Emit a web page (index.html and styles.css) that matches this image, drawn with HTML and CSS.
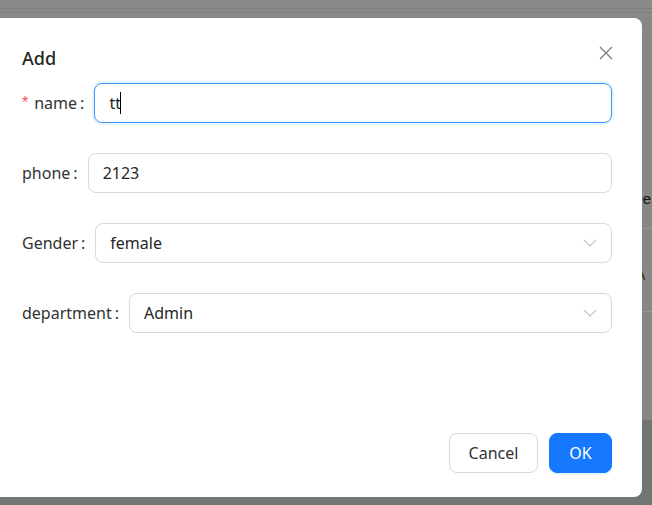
FILE: index.html
```html
<!DOCTYPE html>
<html>
<head>
<meta charset="utf-8">
<link rel="stylesheet" href="styles.css">
</head>
<body>
<div class="page">
  <div class="bg-top"><div class="bg-band"></div></div>
  <div class="bg-body">
    <div class="bg-head"><span class="bg-text">Dep</span></div>
    <div class="bg-row"><span class="bg-text bg-a">A</span></div>
    <div class="bg-row bg-last"></div>
  </div>
  <div class="bg-foot"></div>
</div>

<div class="modal">
  <button class="close" aria-label="close">
    <svg width="14" height="14" viewBox="0 0 14 14"><path d="M1 1 L13 13 M13 1 L1 13" stroke="#808080" stroke-width="1.4" fill="none"/></svg>
  </button>
  <div class="title">Add</div>
  <div class="form">
    <div class="row">
      <label class="label"><span class="req">*</span>name<span class="colon">:</span></label>
      <div class="input focused"><span>tt</span><span class="caret"></span></div>
    </div>
    <div class="row">
      <label class="label">phone<span class="colon">:</span></label>
      <div class="input"><span>2123</span></div>
    </div>
    <div class="row">
      <label class="label">Gender<span class="colon">:</span></label>
      <div class="input select"><span>female</span>
        <svg class="arrow" width="14" height="10" viewBox="0 0 14 10"><path d="M1 2 L7 8 L13 2" stroke="#c4c4c4" stroke-width="1.1" fill="none"/></svg>
      </div>
    </div>
    <div class="row">
      <label class="label">department<span class="colon">:</span></label>
      <div class="input select"><span>Admin</span>
        <svg class="arrow" width="14" height="10" viewBox="0 0 14 10"><path d="M1 2 L7 8 L13 2" stroke="#c4c4c4" stroke-width="1.1" fill="none"/></svg>
      </div>
    </div>
  </div>
  <div class="footer">
    <button class="btn">Cancel</button>
    <button class="btn primary">OK</button>
  </div>
</div>
</body>
</html>
```

FILE: styles.css
```css
* { box-sizing: border-box; }
html, body { margin: 0; padding: 0; }
body {
  width: 652px;
  height: 505px;
  overflow: hidden;
  position: relative;
  font-family: "Noto Sans", "Open Sans", sans-serif;
  background: #8a8a8a;
}
.page {
  height: 505px;
  display: flex;
  flex-direction: column;
}
.bg-top {
  height: 18px;
  background: #8a8a8a;
  padding-top: 8px;
}
.bg-band {
  height: 5px;
  border-top: 1px solid #7e7e7e;
  border-bottom: 1px solid #7e7e7e;
}
.bg-body {
  flex: 0 0 402px;
  background: #878787;
  padding-top: 150px;
  padding-left: 632px;
}
.bg-head {
  height: 61px;
  display: flex;
  align-items: center;
  border-bottom: 1px solid #959595;
}
.bg-row {
  height: 83px;
  display: flex;
  align-items: center;
  padding-top: 10px;
  border-bottom: 1px solid #959595;
}
.bg-last { border-bottom: none; }
.bg-text {
  font-family: "Liberation Sans", sans-serif;
  font-size: 15px;
  color: #111;
  white-space: nowrap;
}
.bg-a { color: #3a2a00; font-size: 14px; margin-left: 4px; }
.bg-foot {
  flex: 1;
  background: #717874;
}

.modal {
  position: absolute;
  top: 18px;
  left: -10px;
  width: 652px;
  height: 479px;
  background: #fff;
  border-radius: 8px;
  padding: 28px 30px 24px 32px;
  display: flex;
  flex-direction: column;
  color: rgba(0,0,0,0.88);
}
.close {
  position: absolute;
  top: 28px;
  right: 29px;
  width: 14px;
  height: 14px;
  padding: 0;
  border: none;
  background: none;
  display: flex;
}
.title {
  font-size: 18px;
  font-weight: 500;
  line-height: 24px;
  height: 24px;
  color: #262626;
}
.form {
  margin-top: 13px;
  display: flex;
  flex-direction: column;
  gap: 30px;
}
.row {
  display: flex;
  align-items: center;
  height: 40px;
}
.label {
  font-size: 16px;
  color: #333;
  display: flex;
  align-items: center;
  white-space: nowrap;
}
.req {
  color: #ff4d4f;
  margin-right: 6px;
  font-family: "Liberation Sans", sans-serif;
  font-size: 16px;
}
.colon {
  margin-left: 3px;
  margin-right: 10px;
}
.input {
  flex: 1;
  height: 40px;
  border: 1px solid #d9d9d9;
  border-radius: 8px;
  padding: 0 14px;
  display: flex;
  align-items: center;
  font-size: 16px;
  color: #262626;
}
.input.focused {
  border-color: #4096ff;
  box-shadow: 0 0 0 2px rgba(5,145,255,0.1);
}
.caret {
  width: 1px;
  height: 22px;
  background: #000;
  margin-left: -1px;
}
.select { justify-content: space-between; }
.footer {
  margin-top: auto;
  display: flex;
  justify-content: flex-end;
  gap: 11px;
}
.btn {
  height: 40px;
  padding: 0 18px;
  border-radius: 8px;
  border: 1px solid #d9d9d9;
  background: #fff;
  font-family: "Noto Sans", sans-serif;
  font-size: 16px;
  color: #333;
  width: 89px;
}
.btn.primary {
  width: 63px;
  padding: 0;
  background: #1677ff;
  border-color: #1677ff;
  color: #fff;
  box-shadow: 0 2px 0 rgba(5,145,255,0.1);
}
```
